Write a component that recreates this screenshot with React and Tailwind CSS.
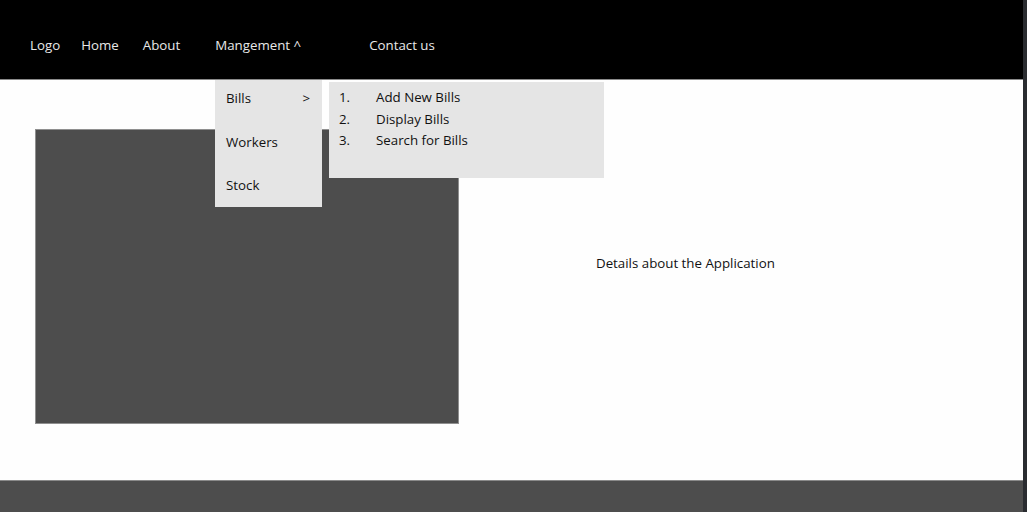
import React from 'react';

const bills = ['Add New Bills', 'Display Bills', 'Search for Bills'];

const App = () => {
  return (
    <div className="flex w-[1027px] h-[512px] overflow-hidden font-['Open_Sans',sans-serif] text-[13.3px]">
      <div className="flex flex-col w-[1023px] h-full bg-[#fefefe]">
        <header className="relative flex items-center h-[80px] shrink-0 bg-black border-b border-[#8a8a8a] pt-[12px] pl-[30px] text-[#e8e8e8]">
          <span>Logo</span>
          <span className="ml-[21px]">Home</span>
          <span className="ml-[24px]">About</span>
          <span className="ml-[35px]">Mangement ^</span>
          <span className="ml-[68px]">Contact us</span>

          {/* open dropdown under Mangement */}
          <div className="absolute left-[215px] top-[80px] z-10 flex">
            <div className="w-[107px] h-[127px] bg-[#e5e5e5] text-[#111] pt-[8px] px-[11px] flex flex-col gap-[23.5px]">
              <div className="flex justify-between leading-[20px]">
                <span>Bills</span>
                <span className="pr-[1px]">&gt;</span>
              </div>
              <div className="leading-[20px]">Workers</div>
              <div className="leading-[20px]">Stock</div>
            </div>
            <ol className="ml-[7px] mt-[2px] w-[275px] h-[96px] bg-[#e5e5e5] text-[#111] pt-[5px] pl-[10px]">
              {bills.map((b, i) => (
                <li key={b} className="flex leading-[21.5px]">
                  <span className="w-[37px]">{i + 1}.</span>
                  <span>{b}</span>
                </li>
              ))}
            </ol>
          </div>
        </header>

        <main className="flex-1 flex items-start pt-[49px] pl-[35px]">
          <div className="w-[424px] h-[295px] bg-[#4d4d4d] border border-[#8f8f8f]" />
          <p className="ml-[137px] mt-[125px] text-[#111]">Details about the Application</p>
        </main>

        <footer className="h-[32px] shrink-0 bg-[#4d4d4d] border-t border-[#8a8a8a]" />
      </div>
      <div className="w-[4px] h-full bg-[#2a2c30]" />
    </div>
  );
};

export default App;
